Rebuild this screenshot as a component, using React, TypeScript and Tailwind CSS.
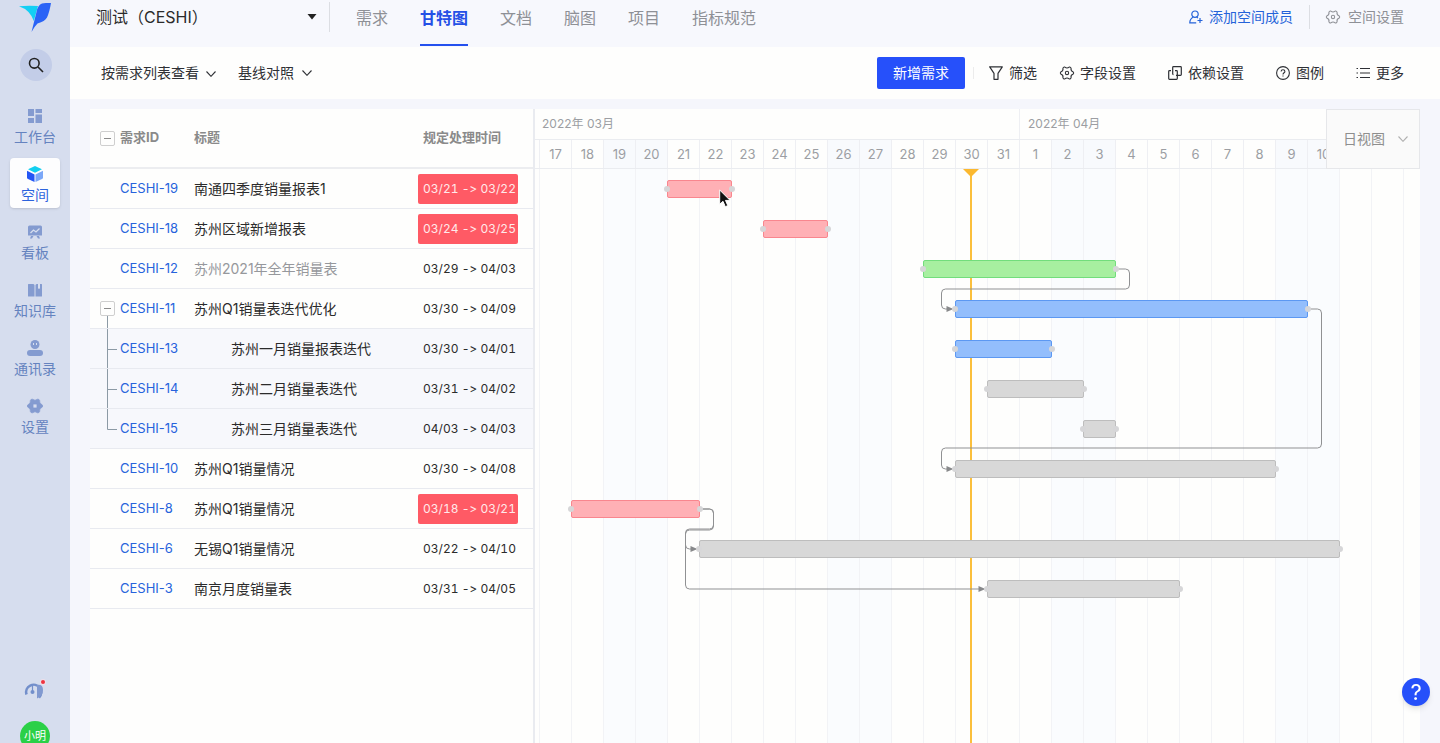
import type { ReactNode } from "react"

const DAY_WIDTH = 32
const LEAD = 4 // visible part of the day before the first full column

type Tone = "red" | "green" | "blue" | "gray"

type Task = {
  id: string
  title: string
  time: string
  start: number
  days: number
  tone: Tone
  overdue?: boolean
  done?: boolean
  parent?: boolean
  child?: "middle" | "last"
}

// start is counted in days from 03/17
const tasks: Task[] = [
  { id: "CESHI-19", title: "南通四季度销量报表1", time: "03/21 -> 03/22", start: 4, days: 2, tone: "red", overdue: true },
  { id: "CESHI-18", title: "苏州区域新增报表", time: "03/24 -> 03/25", start: 7, days: 2, tone: "red", overdue: true },
  { id: "CESHI-12", title: "苏州2021年全年销量表", time: "03/29 -> 04/03", start: 12, days: 6, tone: "green", done: true },
  { id: "CESHI-11", title: "苏州Q1销量表迭代优化", time: "03/30 -> 04/09", start: 13, days: 11, tone: "blue", parent: true },
  { id: "CESHI-13", title: "苏州一月销量报表迭代", time: "03/30 -> 04/01", start: 13, days: 3, tone: "blue", child: "middle" },
  { id: "CESHI-14", title: "苏州二月销量表迭代", time: "03/31 -> 04/02", start: 14, days: 3, tone: "gray", child: "middle" },
  { id: "CESHI-15", title: "苏州三月销量表迭代", time: "04/03 -> 04/03", start: 17, days: 1, tone: "gray", child: "last" },
  { id: "CESHI-10", title: "苏州Q1销量情况", time: "03/30 -> 04/08", start: 13, days: 10, tone: "gray" },
  { id: "CESHI-8", title: "苏州Q1销量情况", time: "03/18 -> 03/21", start: 1, days: 4, tone: "red", overdue: true },
  { id: "CESHI-6", title: "无锡Q1销量情况", time: "03/22 -> 04/10", start: 5, days: 20, tone: "gray" },
  { id: "CESHI-3", title: "南京月度销量表", time: "03/31 -> 04/05", start: 14, days: 6, tone: "gray" },
]

const barTone: Record<Tone, string> = {
  red: "bg-[#ffb0b5] border-[#f9868e]",
  green: "bg-[#a7efa0] border-[#72dd7c]",
  blue: "bg-[#93befc] border-[#5c98f2]",
  gray: "bg-[#d8d8d8] border-[#bdbdbd]",
}

const days = Array.from({ length: 60 }, (_, i) => {
  const date = new Date(2022, 2, 17 + i)
  return { label: date.getDate(), weekend: i < 25 && (date.getDay() === 0 || date.getDay() === 6), blank: i > 24 }
})

// x1,y1: end of the first bar, right/mid/left: bend positions, x2,y2: start of the next bar
const links = [
  { x1: 582, y1: 100, right: 594, mid: 120, left: 406, x2: 418, y2: 140 },
  { x1: 774, y1: 140, right: 786, mid: 279, left: 406, x2: 418, y2: 300 },
  { x1: 166, y1: 340, right: 178, mid: 360, left: 150, x2: 162, y2: 380 },
  { x1: 166, y1: 340, right: 178, mid: 361, left: 150, x2: 450, y2: 420 },
]

function linkPath({ x1, y1, right, mid, left, x2, y2 }: (typeof links)[number]) {
  return `M${x1} ${y1}H${right - 4}q4 0 4 4V${mid - 4}q0 4 -4 4H${left + 4}q-4 0 -4 4V${y2 - 4}q0 4 4 4H${x2 - 6}`
}

const gearPath =
  "M10.460 1.230Q12.100.9 12.630 2.480Q12 5.700 15.090 6.750Q16.200 8 15.090 9.250Q12 10.300 12.630 13.520Q12.100 15.100 10.460 14.770Q8 12.600 5.540 14.770Q3.900 15.100 3.370 13.520Q4 10.300.910 9.250Q-.2 8 .910 6.750Q4 5.700 3.370 2.480Q3.900.9 5.540 1.230Q8 3.400 10.460 1.230Z"

function GearIcon() {
  return (
    <svg viewBox="0 0 16 16" className="size-3.5 overflow-visible" fill="none" stroke="currentColor" strokeWidth="1.2" strokeLinejoin="round">
      <path d={gearPath} />
      <circle cx="8" cy="8" r="1.9" />
    </svg>
  )
}

function FilterIcon() {
  return (
    <svg viewBox="0 0 14 14" className="size-3.5" fill="none" stroke="currentColor" strokeWidth="1.2" strokeLinejoin="round">
      <path d="M.7.8h12.600L9 7.300v6H5v-6Z" />
    </svg>
  )
}

function QuestionIcon() {
  return (
    <svg viewBox="0 0 14 14" className="size-3.5" fill="none" stroke="currentColor" strokeWidth="1.1">
      <circle cx="7" cy="7" r="6.400" />
      <path d="M5.100 5.600C5.100 4.300 5.900 3.700 7 3.700s1.900.7 1.900 1.700C8.900 6.700 7 6.800 7 8.400M7 9.400v1.200" />
    </svg>
  )
}

function UserAddIcon() {
  return (
    <svg viewBox="0 0 14 14" className="size-3.5" fill="none" stroke="currentColor" strokeWidth="1.2">
      <circle cx="6" cy="4.2" r="3.2" />
      <path d="M4.200 7.200C2 8.200.8 10 .8 12.800h6.400M7.600 7.200l1.400.9M11 8v5M8.500 10.500h5" />
    </svg>
  )
}

function DependIcon() {
  return (
    <svg viewBox="0 0 14 14" className="size-3.5" fill="none" stroke="currentColor" strokeWidth="1.2">
      <path d="M8 9.300h4.500a.8.8 0 0 0 .8-.8v-7a.8.8 0 0 0-.8-.8h-7a.8.8 0 0 0-.8.8v6.300a.8.8 0 0 0 .8.8" />
      <path d="M3 4.700H1.500a.8.8 0 0 0-.8.8v7a.8.8 0 0 0 .8.8h7a.8.8 0 0 0 .8-.8V5.500a.8.8 0 0 0-.8-.8H7" />
    </svg>
  )
}

function ListIcon() {
  return (
    <svg viewBox="0 0 14 14" className="size-3.5" fill="none" stroke="currentColor" strokeWidth="1.2">
      <path d="M4 2.500h10M4 7h10M4 11.500h10M.5 2.500H2M.5 7H2M.5 11.500H2" />
    </svg>
  )
}

function Chevron({ className }: { className?: string }) {
  return (
    <svg viewBox="0 0 10 6" className={`pointer-events-none h-1.5 w-2.5 ${className ?? ""}`} fill="none" stroke="currentColor" strokeWidth="1.1">
      <path d="M.5.5 5 5.300 9.500.5" />
    </svg>
  )
}

function Collapse({ label }: { label: string }) {
  return (
    <button aria-label={label} className="ml-2.5 flex size-[15px] items-center justify-center rounded-xs border border-[#cfcfcf]">
      <span className="h-px w-[7px] bg-[#8c8c8c]" />
    </button>
  )
}

const navItems: { label: string; active?: boolean; icon: ReactNode }[] = [
  {
    label: "工作台",
    icon: <path d="M1 1h6v7H1zM8.500 1H15v4H8.500zM8.500 6.500H15V15H8.500zM1 10h6v5H1z" />,
  },
  {
    label: "空间",
    active: true,
    icon: (
      <>
        <path fill="#12cff0" d="M8 0 15 3.200 8 6.800 1 3.200Z" />
        <path fill="#2456f5" d="M0 4.800 7.500 8.500V16L1 13Q0 12.500 0 11.500Z" />
        <path fill="#7ba7f8" d="M16 4.800 8.500 8.500V16L15 13q1-.5 1-1.500Z" />
      </>
    ),
  },
  {
    label: "看板",
    icon: (
      <>
        <path d="M2.500 1.500h11A1.500 1.500 0 0 1 15 3v8.500H1V3a1.500 1.500 0 0 1 1.500-1.500ZM4 12h2.500L5 14.500H3zM9.500 12H12l1 2.500h-2z" />
        <path d="m3.500 9 3-3 2.500 2 3.500-3.500" fill="none" stroke="#d8dfef" strokeWidth="1.3" />
      </>
    ),
  },
  {
    label: "知识库",
    icon: (
      <>
        <path d="M1.500 2H6q1 0 1.500 1v11.500H1.500Q1 14.500 1 14V2.500q0-.5.500-.5ZM8.500 3Q9 2 10 2h4.500q.5 0 .5.500V14q0 .5-.5.500h-6z" />
        <path d="M11 2h2v5l-1-.8-1 .8z" fill="#d8dfef" />
      </>
    ),
  },
  {
    label: "通讯录",
    icon: (
      <>
        <circle cx="8" cy="4.500" r="4.500" />
        <rect x="0" y="10" width="16" height="6" rx="3" />
        <path d="M6.500 3v2M9.500 3v2" stroke="#d8dfef" />
      </>
    ),
  },
  {
    label: "设置",
    icon: <path fillRule="evenodd" stroke="#849bd0" strokeWidth=".8" d={`${gearPath}M6 6v4h4V6Z`} />,
  },
]

function Sidebar() {
  return (
    <aside className="flex w-[70px] shrink-0 flex-col items-center overflow-hidden bg-[#d6ddee] pt-[3px]">
      <svg viewBox="0 0 32 29" className="h-[29px] w-8 shrink-0">
        <path fill="#12cff4" d="M0 3.300Q8 2.300 19 3L14.800 18Q11 7 0 3.300Z" />
        <path fill="#2a63f6" d="M12.500 29 17.500 9Q19 1.500 23 .5 27-.3 32 0 30.500 9 28 14.500 26 18.300 18.500 20.500 15 24 12.500 29Z" />
      </svg>
      <button aria-label="搜索" className="mt-[17px] ml-0.5 flex size-8 shrink-0 items-center justify-center rounded-full bg-[#c3cde8] text-[#222]">
        <svg viewBox="0 0 16 16" className="size-4" fill="none" stroke="currentColor" strokeWidth="1.6">
          <circle cx="6.300" cy="6.300" r="4.800" />
          <path d="m10 10 5 5" />
        </svg>
      </button>
      <nav className="mt-[19px] flex flex-col gap-2">
        {navItems.map((item) => (
          <a
            key={item.label}
            href="#"
            className={`flex h-[50px] w-[50px] flex-col items-center rounded pt-2 text-sm ${
              item.active ? "bg-[#fdfdfe] text-[#2c63dd] shadow-sm" : "text-[#6583bf]"
            }`}
          >
            <svg viewBox="0 0 16 16" className="size-4 shrink-0" fill="#849bd0">
              {item.icon}
            </svg>
            <span className="mt-0.5 leading-[22px] whitespace-nowrap">{item.label}</span>
          </a>
        ))}
      </nav>
      <button aria-label="客服" className="mt-auto mb-5 shrink-0">
        <svg viewBox="0 0 22 22" className="size-[22px]">
          <path d="M2.500 15.500A7.500 7.500 0 1 1 15 18.500" fill="none" stroke="#738fcb" strokeWidth="2.6" />
          <path d="M13 6v13.500q6-2.500 6-8.500T13 6Z" fill="#8199d0" />
          <path d="M8.500 6v6" stroke="#738fcb" strokeWidth="1.2" />
          <circle cx="8.500" cy="13" r="2" fill="#738fcb" />
          <circle cx="19" cy="3" r="3" fill="#efdfe8" />
          <circle cx="19" cy="3" r="2" fill="#ee3340" />
        </svg>
      </button>
      <button className="-mb-2 size-[30px] shrink-0 rounded-full bg-[#2bd047] text-[11px] text-white">小明</button>
    </aside>
  )
}

const tabs = ["需求", "甘特图", "文档", "脑图", "项目", "指标规范"]

function Header() {
  return (
    <header className="flex h-[47px] shrink-0 items-start bg-[#f7f8fd] pr-9 pl-[26px]">
      <div className="relative mt-0.5 h-[30px] w-[234px] border-r border-[#dcdee3]">
        <select aria-label="空间" className="h-[30px] w-full appearance-none text-base text-[#2b2b2b]">
          <option>测试（CESHI）</option>
        </select>
        <svg viewBox="0 0 10 6" className="pointer-events-none absolute top-3 right-3 h-1.5 w-2.5 fill-[#222]">
          <path d="M.5 0h9L5 5.500Z" />
        </svg>
      </div>
      <nav className="ml-[26px] flex gap-8 text-base whitespace-nowrap">
        {tabs.map((tab) => (
          <a
            key={tab}
            href="#"
            className={`flex h-[46px] items-center border-b-2 pb-2 ${
              tab === "甘特图" ? "border-[#2450ee] font-bold text-[#2450e6]" : "border-transparent text-[#8e9096]"
            }`}
          >
            {tab}
          </a>
        ))}
      </nav>
      <div className="mt-1 ml-auto flex h-[26px] items-center text-sm whitespace-nowrap">
        <button className="flex items-center gap-1.5 text-[#2563d9]">
          <UserAddIcon />
          添加空间成员
        </button>
        <span className="mx-4 h-6 w-px bg-[#dcdee3]" />
        <button className="flex items-center gap-2 text-[#8e9096]">
          <GearIcon />
          空间设置
        </button>
      </div>
    </header>
  )
}

function Toolbar() {
  return (
    <div className="flex h-[52px] shrink-0 items-center bg-[#fefefd] pr-9 pl-[31px] text-sm whitespace-nowrap text-[#2e3035]">
      <div className="relative">
        <select aria-label="查看方式" className="w-[115px] appearance-none">
          <option>按需求列表查看</option>
        </select>
        <Chevron className="absolute top-2 right-0" />
      </div>
      <button className="ml-[22px] flex items-center gap-2">
        基线对照
        <Chevron />
      </button>
      <button className="ml-auto h-8 rounded-xs bg-[#2650fa] px-4 text-white">新增需求</button>
      <span className="mr-[15px] ml-2 h-3 w-px bg-[#ececec]" />
      <button className="flex items-center gap-1.5">
        <FilterIcon />
        筛选
      </button>
      <button className="ml-[23px] flex items-center gap-1.5">
        <GearIcon />
        字段设置
      </button>
      <button className="ml-8 flex items-center gap-1.5">
        <DependIcon />
        依赖设置
      </button>
      <button className="ml-8 flex items-center gap-1.5">
        <QuestionIcon />
        图例
      </button>
      <button className="ml-8 flex items-center gap-1.5">
        <ListIcon />
        更多
      </button>
    </div>
  )
}

function TreeLine({ task }: { task: Task }) {
  if (task.parent) {
    return (
      <div className="relative flex h-[39px] items-center">
        <Collapse label="收起子需求" />
        <span className="absolute bottom-0 left-[17px] h-3 w-px bg-[#8c9aa5]" />
      </div>
    )
  }
  if (!task.child) return null
  return (
    <svg viewBox="0 0 30 39" className="block h-[39px] w-[30px]" fill="none" stroke="#8c9aa5">
      <path d={task.child === "last" ? "M17.500 0V20.500H27" : "M17.500 0V39M17.500 20.500H27"} />
    </svg>
  )
}

function TaskTable() {
  return (
    <div className="w-[445px] shrink-0 border-r-2 border-[#e9ebf0] bg-[#fefefd]">
      <table className="w-full table-fixed border-separate border-spacing-0 text-left [&_td]:border-b [&_td]:border-[#e8eaf0] [&_th]:border-b-2 [&_th]:border-[#ecedf0]">
        <thead>
          <tr className="h-[60px] text-[13px] text-[#8a8a8a]">
            <th className="w-[30px] p-0">
              <Collapse label="全部收起" />
            </th>
            <th className="w-[74px] p-0 font-bold">需求ID</th>
            <th className="p-0 font-bold">标题</th>
            <th className="w-[115px] p-0 pl-[5px] font-bold">规定处理时间</th>
          </tr>
        </thead>
        <tbody>
          {tasks.map((task) => (
            <tr key={task.id} className={`h-10 ${task.child ? "bg-[#f7f8fc]" : ""}`}>
              <td className="p-0">
                <TreeLine task={task} />
              </td>
              <td className="p-0 text-[13px]">
                <a href="#" className="text-[#2763dc]">
                  {task.id}
                </a>
              </td>
              <td className={`p-0 text-sm ${task.child ? "pl-[37px]" : ""} ${task.done ? "text-[#96989c]" : "text-[#2b2b2b]"}`}>
                {task.title}
              </td>
              <td className="p-0">
                <span
                  className={`flex h-[30px] w-[100px] items-center rounded-xs pl-[5px] text-xs whitespace-nowrap [font-feature-settings:'calt'_0,'tnum'_1] ${
                    task.overdue ? "bg-[#ff5a65] text-[#ffe9ea]" : "text-[#2b2b2b]"
                  }`}
                >
                  {task.time}
                </span>
              </td>
            </tr>
          ))}
        </tbody>
      </table>
    </div>
  )
}

function Bar({ task }: { task: Task }) {
  return (
    <div className="flex h-10 items-center">
      <div
        className={`relative h-[18px] shrink-0 rounded-xs border ${barTone[task.tone]}`}
        style={{ marginLeft: LEAD + task.start * DAY_WIDTH, width: task.days * DAY_WIDTH + 1 }}
      >
        <span className="absolute top-[5px] -left-1 size-1.5 rounded-full bg-[#d6d6d8]" />
        <span className="absolute top-[5px] -right-1 size-1.5 rounded-full bg-[#d6d6d8]" />
      </div>
    </div>
  )
}

function Chart() {
  return (
    <div className="relative flex min-w-0 flex-1 flex-col overflow-hidden bg-[#fefefd]">
      <div className="flex h-[31px] shrink-0 border-b border-[#eaecf0] text-xs leading-[30px] text-[#9c9ea3]">
        <div className="w-[484px] shrink-0 px-[7px]">2022年 03月</div>
        <div className="flex-1 border-l border-[#eeeff3] px-2">2022年 04月</div>
      </div>
      <div className="flex h-[29px] shrink-0 border-b border-[#eaecf0] pl-1 text-[13px] leading-[29px] text-[#9c9ea3]">
        {days.map((day, i) => (
          <div
            key={i}
            className={`w-8 shrink-0 border-l border-[#eeeff3] text-center ${day.weekend ? "bg-[#f8fafd]" : ""}`}
          >
            {day.blank ? "" : day.label}
          </div>
        ))}
      </div>
      <div className="relative flex-1">
        <div className="absolute inset-0 flex overflow-hidden pl-1">
          {days.map((day, i) => (
            <div key={i} className={`w-8 shrink-0 border-l border-[#f2f3f6] ${day.weekend ? "bg-[#fafcfe]" : ""}`} />
          ))}
        </div>
        <div className="absolute inset-y-0 left-[435px] w-0.5 bg-[#fbbf3c]" />
        <svg className="absolute top-0 left-[428px] h-2 w-4" viewBox="0 0 16 8">
          <path d="M0 0h16L8 8Z" fill="#fbb82f" />
        </svg>
        <svg className="absolute inset-0 h-full w-full" fill="none" stroke="#909193">
          {links.map((link) => (
            <g key={`${link.left}-${link.y2}`} transform="translate(.5 0)">
              <path d={linkPath(link)} />
              <path d={`M${link.x2 - 7} ${link.y2 - 3}l7 3-7 3z`} fill="#88898b" stroke="none" />
            </g>
          ))}
        </svg>
        <div className="relative">
          {tasks.map((task) => (
            <Bar key={task.id} task={task} />
          ))}
        </div>
        <svg className="absolute top-5 left-[184px] h-[19px] w-3" viewBox="0 0 12 19">
          <path d="M.7 1v14.300l3.300-3 2.300 5.400 2.500-1.100-2.300-5.200h4.600Z" fill="#111" stroke="#fff" />
        </svg>
      </div>
      <div className="absolute top-0 right-0 h-[60px] w-[94px] border border-[#e6e7ea] bg-[#fafafa] text-[#8e8e8e]">
        <select aria-label="视图" className="h-full w-full appearance-none pl-4 text-sm">
          <option>日视图</option>
        </select>
        <Chevron className="absolute top-[26px] right-[11px] text-[#b0b0b0]" />
      </div>
    </div>
  )
}

export default function App() {
  return (
    <div className="flex h-screen overflow-hidden bg-[#f5f6fc] font-[Inter,'Noto_Sans_CJK_SC',sans-serif] [font-feature-settings:'calt'_0]">
      <Sidebar />
      <div className="flex min-w-0 flex-1 flex-col">
        <Header />
        <Toolbar />
        <main className="flex min-h-0 flex-1 px-5 pt-2.5">
          <TaskTable />
          <Chart />
        </main>
      </div>
      <button
        aria-label="帮助"
        className="fixed right-2.5 bottom-[37px] flex size-7 items-center justify-center rounded-full bg-[#2650fa] text-[22px] text-white shadow-md"
      >
        ?
      </button>
    </div>
  )
}
